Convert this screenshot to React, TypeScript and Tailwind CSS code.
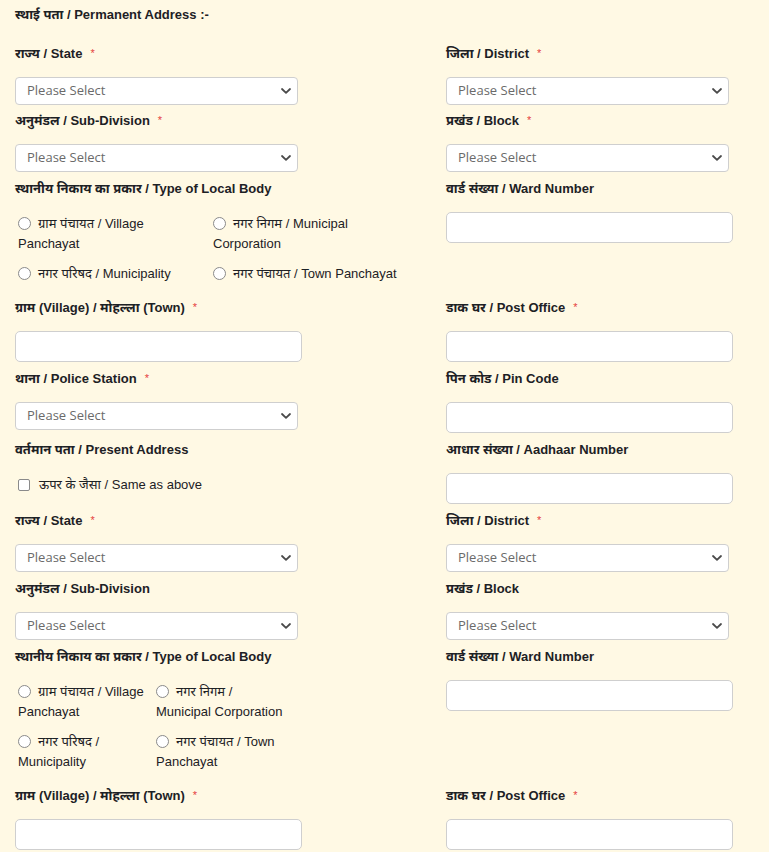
import React from "react";

function Req() {
  return (
    <span className="relative top-[-1px] ml-[8px] text-[11px] font-normal text-[#e53e3e]">*</span>
  );
}

function Label({ text, req }: { text: string; req?: boolean }) {
  return (
    <div className="h-[20px] whitespace-nowrap text-[13px] font-bold leading-[20px] text-[#1d2125]">
      {text}
      {req && <Req />}
    </div>
  );
}

function Select() {
  return (
    <div className="relative flex h-[28px] w-[283px] items-center rounded-[4px] border border-[#cfcfcf] bg-white pl-[11px] font-['Open_Sans','Liberation_Sans',sans-serif] text-[13px] text-[#6a6a6a]">
      Please Select
      <svg
        className="absolute right-[6px] top-1/2 -translate-y-1/2"
        width="10"
        height="6"
        viewBox="0 0 10 6"
        fill="none"
      >
        <path d="M1 1 L5 4.8 L9 1" stroke="#4a4a4a" strokeWidth="1.8" strokeLinecap="round" strokeLinejoin="round" />
      </svg>
    </div>
  );
}

function TextInput() {
  return (
    <input
      type="text"
      className="block h-[31px] w-[287px] rounded-[5px] border border-[#cfcfcf] bg-white outline-none"
    />
  );
}

function Field({
  label,
  req,
  kind,
}: {
  label: string;
  req?: boolean;
  kind: "select" | "input";
}) {
  return (
    <div>
      <Label text={label} req={req} />
      <div className="mt-[13px]">{kind === "select" ? <Select /> : <TextInput />}</div>
    </div>
  );
}

function Radio() {
  return (
    <span className="mr-[7px] inline-block h-[13px] w-[13px] rounded-full border border-[#8a8a8a] bg-white align-[-2px]" />
  );
}

function RadioCell({ first, second }: { first: string; second?: string }) {
  return (
    <div className="whitespace-nowrap text-[13px] leading-[20px] text-[#1d2125]">
      <Radio />
      {first}
      {second && (
        <>
          <br />
          {second}
        </>
      )}
    </div>
  );
}

function Row({ children, tight }: { children: React.ReactNode; tight?: boolean }) {
  return (
    <div className={tight ? "mb-[6px] grid grid-cols-[431px_1fr] items-start" : "mb-[7px] grid grid-cols-[431px_1fr] items-start"}>
      {children}
    </div>
  );
}

export default function App() {
  return (
    <div className="min-h-screen bg-[#fff9e4] pl-[15px] pt-[5px] font-['Liberation_Sans','Noto_Sans_Devanagari','Lohit_Devanagari',Arial,sans-serif]">
      <div className="mb-[19px] h-[20px] text-[13px] font-bold leading-[20px] text-[#1d2125]">
        स्थाई पता / Permanent Address :-
      </div>

      <Row tight>
        <Field label="राज्य / State" req kind="select" />
        <Field label="जिला / District" req kind="select" />
      </Row>
      <Row>
        <Field label="अनुमंडल / Sub-Division" req kind="select" />
        <Field label="प्रखंड / Block" req kind="select" />
      </Row>
      <Row>
        <div>
          <Label text="स्थानीय निकाय का प्रकार / Type of Local Body" />
          <div className="mb-[7px] ml-[3px] mt-[15px] grid grid-cols-[195px_1fr] gap-y-[10px]">
            <RadioCell first="ग्राम पंचायत / Village" second="Panchayat" />
            <RadioCell first="नगर निगम / Municipal" second="Corporation" />
            <RadioCell first="नगर परिषद / Municipality" />
            <RadioCell first="नगर पंचायत / Town Panchayat" />
          </div>
        </div>
        <Field label="वार्ड संख्या / Ward Number" kind="input" />
      </Row>
      <Row>
        <Field label="ग्राम (Village) / मोहल्ला (Town)" req kind="input" />
        <Field label="डाक घर / Post Office" req kind="input" />
      </Row>
      <Row>
        <Field label="थाना / Police Station" req kind="select" />
        <Field label="पिन कोड / Pin Code" kind="input" />
      </Row>
      <Row>
        <div>
          <Label text="वर्तमान पता / Present Address" />
          <div className="ml-[3px] mt-[15px] whitespace-nowrap text-[13px] leading-[20px] text-[#1d2125]">
            <span className="mr-[9px] inline-block h-[12px] w-[12px] rounded-[2px] border border-[#8a8a8a] bg-white align-[-2px]" />
            ऊपर के जैसा / Same as above
          </div>
        </div>
        <Field label="आधार संख्या / Aadhaar Number" kind="input" />
      </Row>
      <Row>
        <Field label="राज्य / State" req kind="select" />
        <Field label="जिला / District" req kind="select" />
      </Row>
      <Row>
        <Field label="अनुमंडल / Sub-Division" kind="select" />
        <Field label="प्रखंड / Block" kind="select" />
      </Row>
      <Row>
        <div>
          <Label text="स्थानीय निकाय का प्रकार / Type of Local Body" />
          <div className="mb-[7px] ml-[3px] mt-[15px] grid grid-cols-[138px_1fr] gap-y-[10px]">
            <RadioCell first="ग्राम पंचायत / Village" second="Panchayat" />
            <RadioCell first="नगर निगम /" second="Municipal Corporation" />
            <RadioCell first="नगर परिषद /" second="Municipality" />
            <RadioCell first="नगर पंचायत / Town" second="Panchayat" />
          </div>
        </div>
        <Field label="वार्ड संख्या / Ward Number" kind="input" />
      </Row>
      <Row>
        <Field label="ग्राम (Village) / मोहल्ला (Town)" req kind="input" />
        <Field label="डाक घर / Post Office" req kind="input" />
      </Row>
    </div>
  );
}
